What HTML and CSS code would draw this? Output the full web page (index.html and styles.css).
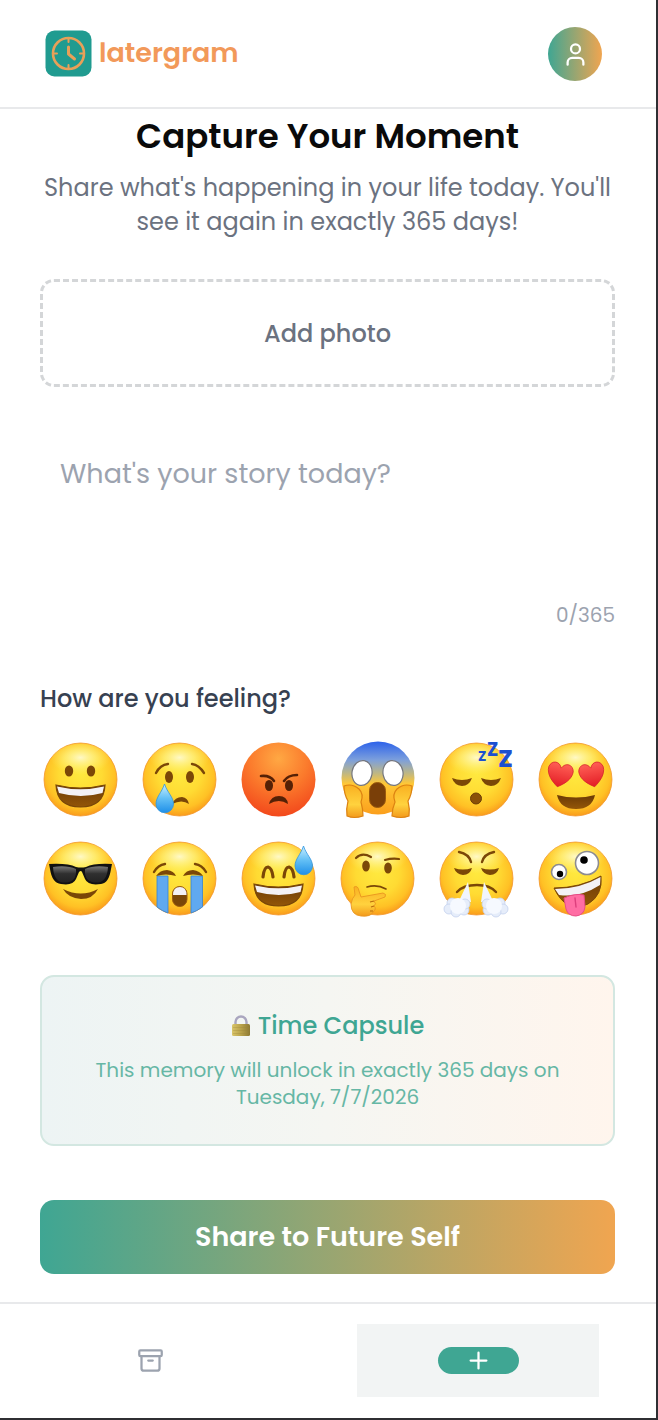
FILE: index.html
```html
<!DOCTYPE html>
<html lang="en">
<head>
    <meta charset="UTF-8">
    <meta name="viewport" content="width=device-width, initial-scale=1.0">
    <title>latergram</title>
    <link rel="stylesheet" href="styles.css">
</head>
<body>
    <!-- Shared emoji parts -->
    <svg class="sprite" width="0" height="0" aria-hidden="true">
        <defs>
            <radialGradient id="yellow" cx="50%" cy="42%" r="59%">
                <stop offset="0" stop-color="#ffe93f"/>
                <stop offset="0.5" stop-color="#ffdb33"/>
                <stop offset="0.8" stop-color="#ffc125"/>
                <stop offset="1" stop-color="#f9981b"/>
            </radialGradient>
            <radialGradient id="shine" cx="50%" cy="40%" r="50%">
                <stop offset="0" stop-color="#fffde0" stop-opacity="0.850"/>
                <stop offset="0.5" stop-color="#fff9a0" stop-opacity="0.500"/>
                <stop offset="1" stop-color="#fff27a" stop-opacity="0"/>
            </radialGradient>
            <radialGradient id="red" cx="50%" cy="22%" r="80%">
                <stop offset="0" stop-color="#ffa843"/>
                <stop offset="0.5" stop-color="#fb7a2c"/>
                <stop offset="1" stop-color="#f2461b"/>
            </radialGradient>
            <linearGradient id="fear" x1="0" y1="0" x2="0" y2="1">
                <stop offset="0" stop-color="#2c62ea"/>
                <stop offset="0.25" stop-color="#7c9fdc"/>
                <stop offset="0.42" stop-color="#b8b58c"/>
                <stop offset="0.58" stop-color="#ffc836"/>
                <stop offset="1" stop-color="#fb9f1c"/>
            </linearGradient>
            <linearGradient id="tear" x1="0" y1="0" x2="0" y2="1">
                <stop offset="0" stop-color="#c9efff"/>
                <stop offset="0.5" stop-color="#62bff5"/>
                <stop offset="1" stop-color="#1f8fe8"/>
            </linearGradient>
            <linearGradient id="lens" x1="0" y1="0" x2="0" y2="1">
                <stop offset="0" stop-color="#777"/>
                <stop offset="0.45" stop-color="#303030"/>
                <stop offset="1" stop-color="#222"/>
            </linearGradient>
            <linearGradient id="hand" x1="0" y1="0" x2="0" y2="1">
                <stop offset="0" stop-color="#f9b021"/>
                <stop offset="0.6" stop-color="#ffd23e"/>
                <stop offset="1" stop-color="#f39a1c"/>
            </linearGradient>
            <linearGradient id="heart" x1="0" y1="0" x2="0" y2="1">
                <stop offset="0" stop-color="#ff5f55"/>
                <stop offset="1" stop-color="#e31c25"/>
            </linearGradient>
            <linearGradient id="mouth" x1="0" y1="0" x2="0" y2="1">
                <stop offset="0" stop-color="#6b3a06"/>
                <stop offset="1" stop-color="#935608"/>
            </linearGradient>
            <linearGradient id="brass" x1="0" y1="0" x2="1" y2="0">
                <stop offset="0" stop-color="#d9c56a"/>
                <stop offset="0.5" stop-color="#b9a24b"/>
                <stop offset="1" stop-color="#8e7a34"/>
            </linearGradient>
            <g id="face">
                <circle cx="40.500" cy="40.500" r="36.500" fill="url(#yellow)" stroke="#f3952a" stroke-width="0.800"/>
                <ellipse cx="40.500" cy="22" rx="30" ry="17" fill="url(#shine)"/>
            </g>
            <g id="grin">
                <path d="M16 46Q40 52 65 46Q64 68 40.500 68Q17 68 16 46Z" fill="url(#mouth)"/>
                <path d="M17 47.500Q40 53 64 47.500L62.500 54Q41 60 19 54Z" fill="#f3f1f5"/>
                <path d="M16 46Q40 52 65 46Q64 68 40.500 68Q17 68 16 46Z" fill="none" stroke="#7a4708" stroke-width="1.200"/>
            </g>
            <path id="drop" d="M0 0C3 9 9 13 9 20A8.500 8.500 0 0 1 -8.500 20C-8.500 13 -3 9 0 0Z" fill="url(#tear)" stroke="#2f94df" stroke-width="0.800"/>
            <path id="love" d="M0 13C-6 9 -13 3 -12.500 -5C-11 -12 -3 -13 0 -6C3 -13 11 -12 12.500 -5C13 3 6 9 0 13Z" fill="url(#heart)" stroke="#d3202a" stroke-width="0.700"/>
            <g id="puff">
                <path d="M0 0L-9 19L3 20Z" fill="#f1f5fd"/>
                <g fill="#e6edfa" stroke="#c3d1ee" stroke-width="0.800">
                    <circle cx="-16" cy="21" r="5"/><circle cx="-19" cy="27" r="5"/><circle cx="-12" cy="30" r="5"/><circle cx="-4" cy="28" r="5"/><circle cx="-3" cy="22" r="5"/>
                </g>
                <circle cx="-10" cy="24" r="8" fill="#f6f9ff"/>
            </g>
        </defs>
    </svg>

    <div class="app">
        <header class="header">
            <a class="logo" href="#">
                <svg class="logo-icon" viewBox="0 0 47 47" aria-hidden="true">
                    <rect x="0.500" y="0.500" width="46" height="46" rx="9" fill="#209b90"/>
                    <g fill="none" stroke="#e9a058" stroke-linecap="round" stroke-linejoin="round">
                        <circle cx="23.500" cy="23.500" r="15.500" stroke-width="2.600"/>
                        <path d="M23.500 8v4M23.500 35v4M8 23.500h4M35 23.500h4" stroke-width="2"/>
                        <path d="M23.500 17v7l6 5" stroke-width="3"/>
                    </g>
                </svg>
                <span class="logo-text">latergram</span>
            </a>
            <button class="avatar" aria-label="Profile">
                <svg width="27" height="27" viewBox="0 0 24 24" fill="none" stroke="currentColor" stroke-width="2" stroke-linecap="round" stroke-linejoin="round">
                    <path d="M19 21v-2a4 4 0 0 0-4-4H9a4 4 0 0 0-4 4v2"/>
                    <circle cx="12" cy="7" r="4"/>
                </svg>
            </button>
        </header>

        <main class="content">
            <h1 class="title">Capture Your Moment</h1>
            <p class="subtitle">Share what's happening in your life today. You'll see it again in exactly 365 days!</p>

            <button class="add-photo">Add photo</button>

            <textarea class="story" aria-label="Your story" maxlength="365" placeholder="What's your story today?"></textarea>
            <div class="counter">0/365</div>

            <h2 class="question">How are you feeling?</h2>
            <div class="moods">
                <button class="mood" aria-label="Happy">
                    <svg viewBox="0 0 80 80">
                        <use href="#face"/>
                        <g fill="#7b4707"><ellipse cx="29" cy="32" rx="4.200" ry="5.500"/><ellipse cx="51" cy="32" rx="4.200" ry="5.500"/></g>
                        <use href="#grin"/>
                    </svg>
                </button>
                <button class="mood" aria-label="Sad">
                    <svg viewBox="0 0 80 80">
                        <use href="#face"/>
                        <g fill="#7b4707"><ellipse cx="30" cy="38" rx="4" ry="6"/><ellipse cx="51" cy="38" rx="4" ry="6"/></g>
                        <g fill="none" stroke="#7b4707" stroke-width="2.400" stroke-linecap="round"><path d="M17 34Q21 26 29 25"/><path d="M53 25Q60 26 65 34"/></g>
                        <path d="M33 65Q36 58 43 58Q49 59 50 65Q43 60 33 65Z" fill="#7b4707"/>
                        <use href="#drop" x="25.500" y="45"/>
                    </svg>
                </button>
                <button class="mood" aria-label="Angry">
                    <svg viewBox="0 0 80 80">
                        <circle cx="40.500" cy="40.500" r="37" fill="url(#red)"/>
                        <g fill="#552106"><ellipse cx="31" cy="46.500" rx="4" ry="5.500"/><ellipse cx="51" cy="46.500" rx="4" ry="5.500"/></g>
                        <g fill="none" stroke="#552106" stroke-width="2.600" stroke-linecap="round"><path d="M23 37Q32 36 36 42"/><path d="M46 42Q50 36 59 36"/></g>
                        <path d="M31 65Q33 57 41 57Q49 57 50 65Q41 59 31 65Z" fill="#552106"/>
                    </svg>
                </button>
                <button class="mood" aria-label="Shocked">
                    <svg viewBox="0 0 80 80">
                        <circle cx="41" cy="39" r="36.500" fill="url(#fear)"/>
                        <g fill="#fff" stroke="#74767e" stroke-width="1.200"><ellipse cx="25" cy="34" rx="10" ry="12.500" transform="rotate(10 25 34)"/><ellipse cx="56" cy="34" rx="10" ry="12.500" transform="rotate(-10 56 34)"/></g>
                        <rect x="32.500" y="43.500" width="16" height="25" rx="8" fill="#7a3f08" stroke="#9c5a0c"/>
                        <g fill="url(#hand)" stroke="#dc8212" stroke-width="1.200">
                            <path d="M7 47Q15 44 22 50Q27 55 24 63Q26 70 26 77Q17 80 10 77Q9 70 11 62Q7 55 7 47Z"/>
                            <path d="M75 47Q67 44 60 50Q55 55 58 63Q55 70 55 77Q64 80 72 77Q73 70 71 62Q75 55 75 47Z"/>
                        </g>
                    </svg>
                </button>
                <button class="mood" aria-label="Sleepy">
                    <svg viewBox="0 0 80 80">
                        <use href="#face"/>
                        <g fill="#7b4707"><path d="M16 39Q26 43 36 39Q33 47 26 47Q18 46 16 39Z"/><path d="M45 39Q55 43 65 39Q62 47 55 47Q47 46 45 39Z"/></g>
                        <circle cx="40" cy="59.500" r="5.500" fill="#8a5008" stroke="#6d3e06"/>
                        <g class="zzz"><text x="42" y="22" font-size="14">Z</text><text x="51" y="17" font-size="19">Z</text><text x="62" y="28" font-size="25">Z</text></g>
                    </svg>
                </button>
                <button class="mood" aria-label="In love">
                    <svg viewBox="0 0 80 80">
                        <use href="#face"/>
                        <use href="#love" transform="translate(25 35) rotate(12)"/>
                        <use href="#love" transform="translate(57 35) rotate(-12)"/>
                        <path d="M22 56Q41 61 60 56Q57 70 41 70Q25 70 22 56Z" fill="url(#mouth)"/>
                    </svg>
                </button>
                <button class="mood" aria-label="Cool">
                    <svg viewBox="0 0 80 80">
                        <use href="#face"/>
                        <path d="M9 26Q28 25 36 29Q41 30 46 29Q54 25 72 26L71 31Q69 45 61 46Q48 48 45 41L42 34Q41 32 39 34L36 41Q33 48 21 46Q12 45 10 31Z" fill="#111"/>
                        <path d="M13 29Q27 27 36 31Q37 43 27 44.500Q14 46 13 29Z" fill="url(#lens)"/>
                        <path d="M68 29Q54 27 45 31Q44 43 54 44.500Q67 46 68 29Z" fill="url(#lens)"/>
                        <path d="M23 51Q41 60 58 51Q53 61 41 61Q28 60 23 51Z" fill="#7b4707"/>
                    </svg>
                </button>
                <button class="mood" aria-label="Crying">
                    <svg viewBox="0 0 80 80">
                        <use href="#face"/>
                        <path d="M18 38H29V75Q23 73 18 69Z" fill="#60a9f0" stroke="#3484d6" stroke-width="0.800"/>
                        <path d="M52 38H63.500V69Q58 73 52 75Z" fill="#60a9f0" stroke="#3484d6" stroke-width="0.800"/>
                        <g fill="none" stroke="#7b4707" stroke-width="2.400" stroke-linecap="round"><path d="M15 34Q19 27 26 26"/><path d="M56 26Q63 27 67 34"/></g>
                        <g fill="#7b4707"><path d="M17 38Q21 32 28 32Q35 33 37 38Q27 35 17 38Z"/><path d="M44 38Q47 32 54 32Q61 33 64 38Q54 35 44 38Z"/></g>
                        <rect x="33.500" y="48.500" width="14.500" height="20" rx="7.250" fill="#7a4708" stroke="#9c5a0c"/>
                        <path d="M34 57Q34 49 41 49Q47.500 49 47.500 57Z" fill="#f3f1f5"/>
                    </svg>
                </button>
                <button class="mood" aria-label="Relieved">
                    <svg viewBox="0 0 80 80">
                        <use href="#face"/>
                        <g fill="none" stroke="#7b4707" stroke-width="3.200" stroke-linecap="round"><path d="M25 39Q26 29 30 29Q34 30 35 39"/><path d="M46 39Q47 29 51 29Q55 30 56 39"/></g>
                        <use href="#grin"/>
                        <use href="#drop" x="65.500" y="8"/>
                    </svg>
                </button>
                <button class="mood" aria-label="Thinking">
                    <svg viewBox="0 0 80 80">
                        <use href="#face"/>
                        <g fill="#7b4707"><ellipse cx="29" cy="28" rx="3.800" ry="5.500"/><ellipse cx="51" cy="30" rx="3.800" ry="5.500"/></g>
                        <g fill="none" stroke="#7b4707" stroke-width="2.200" stroke-linecap="round"><path d="M19 20Q25 14 34 19"/><path d="M48 22Q55 20 62 21"/><path d="M30 49Q40 46 49 51" stroke-width="1.600"/></g>
                        <path d="M17 49Q21 47 22 53L24 59L46 55Q50 56 48 59L37 63Q40 66 37 68Q40 71 36 74Q34 79 24 78Q14 77 14 66Q15 60 18 57Z" fill="url(#hand)" stroke="#e9951f" stroke-width="0.900" stroke-linejoin="round"/>
                        <path d="M37 63L33 64M37 68L34 69M36 73L33 73" stroke="#b96a0c" stroke-width="1.200"/>
                    </svg>
                </button>
                <button class="mood" aria-label="Frustrated">
                    <svg viewBox="0 0 80 80">
                        <use href="#face"/>
                        <g fill="none" stroke="#7b4707" stroke-width="2.400" stroke-linecap="round"><path d="M23 14Q33 16 35 24"/><path d="M58 14Q48 16 46 24"/><path d="M21 54Q27 47 41 47Q54 47 60 54"/></g>
                        <g fill="#7b4707"><path d="M18 30Q27 33 36 30Q34 37 27 37Q20 36 18 30Z"/><path d="M45 30Q54 33 63 30Q61 37 54 37Q47 36 45 30Z"/></g>
                        <use href="#puff" x="32" y="44"/>
                        <use href="#puff" transform="translate(48 44) scale(-1 1)"/>
                    </svg>
                </button>
                <button class="mood" aria-label="Silly">
                    <svg viewBox="0 0 80 80">
                        <use href="#face"/>
                        <g fill="#fff" stroke="#8c8b91" stroke-width="1.600"><circle cx="24" cy="34" r="7.500"/><circle cx="52" cy="25" r="11.500"/></g>
                        <circle cx="25" cy="36" r="3.200"/><circle cx="49" cy="22" r="3.800"/>
                        <path d="M19 50Q45 50 66 38Q68 57 53 66Q31 76 19 50Z" fill="url(#mouth)" stroke="#7b4707"/>
                        <path d="M20 51Q45 51 65.500 39L65 47Q45 60 24 57Z" fill="#f3f1f5"/>
                        <path d="M29 60Q39 55 49 57L50 69Q49 77 41 78Q33 78 31 71Z" fill="#ff6da4" stroke="#e84b87"/>
                        <path d="M40 60L41 69" stroke="#dd3f7d" stroke-width="1.400" stroke-linecap="round"/>
                    </svg>
                </button>
            </div>

            <section class="capsule">
                <h3 class="capsule-title">
                    <svg class="lock" width="20" height="24" viewBox="0 0 20 24" aria-hidden="true">
                        <path d="M4.500 12V8a5.500 5.500 0 0 1 11 0v4" fill="none" stroke="#aaa6bf" stroke-width="2.400"/>
                        <rect x="1" y="10" width="18" height="12" rx="1.500" fill="url(#brass)"/>
                        <path d="M2 13.500h16M2 16.500h16M2 19.500h16" stroke="#9c8638" stroke-opacity="0.300"/>
                    </svg>
                    Time Capsule
                </h3>
                <p class="capsule-text">This memory will unlock in exactly 365 days on Tuesday, 7/7/2026</p>
            </section>

            <button class="share">Share to Future Self</button>
        </main>

        <nav class="nav">
            <a class="nav-item" href="#" aria-label="Archive">
                <svg width="27" height="27" viewBox="0 0 24 24" fill="none" stroke="currentColor" stroke-width="2" stroke-linecap="round" stroke-linejoin="round">
                    <rect x="2" y="3" width="20" height="5" rx="1"/>
                    <path d="M4 8v11a2 2 0 0 0 2 2h12a2 2 0 0 0 2-2V8M10 12h4"/>
                </svg>
            </a>
            <a class="nav-item active" href="#" aria-label="New post">
                <span class="pill">
                    <svg width="27" height="27" viewBox="0 0 24 24" fill="none" stroke="currentColor" stroke-width="2" stroke-linecap="round"><path d="M5 12h14M12 5v14"/></svg>
                </span>
            </a>
        </nav>
    </div>
</body>
</html>
```
FILE: styles.css
```css
* {
    box-sizing: border-box;
}

body {
    margin: 0;
    background-color: #fff;
    font-family: Poppins, Inter, sans-serif;
}

button, textarea {
    font-family: inherit;
}

button {
    padding: 0;
    border: none;
    background: none;
    cursor: pointer;
}

.sprite {
    position: absolute;
}

.app {
    display: flex;
    flex-direction: column;
    min-height: 100vh;
    border-right: 2px solid #2f2f33;
    border-bottom: 2px solid #2f2f33;
}

.header {
    display: flex;
    justify-content: space-between;
    align-items: center;
    padding: 27px 54px 26px 45px;
    border-bottom: 2px solid #e8e9eb;
}

.logo {
    display: flex;
    align-items: center;
    gap: 7px;
    padding-bottom: 2px;
    text-decoration: none;
}

.logo-icon {
    width: 47px;
    height: 47px;
}

.logo-text {
    padding-bottom: 2px;
    color: #f2995a;
    font-size: 27px;
    font-weight: 600;
    line-height: 45px;
}

.avatar {
    display: flex;
    justify-content: center;
    align-items: center;
    width: 54px;
    height: 54px;
    border-radius: 50%;
    background: linear-gradient(90deg, #3fa693, #f0a550);
    color: #fff;
}

.content {
    display: flex;
    flex-direction: column;
    padding: 6px 41px 28px 40px;
}

.title {
    margin: 0 0 14px;
    color: #0a0a0a;
    font-size: 34px;
    font-weight: 600;
    line-height: 42px;
    text-align: center;
}

.subtitle {
    margin: 0 0 40px;
    color: #6b7280;
    font-size: 24px;
    line-height: 34px;
    text-align: center;
}

.add-photo {
    height: 108px;
    margin-bottom: 54px;
    border: 3px dashed #d4d6d8;
    border-radius: 14px;
    color: #6b7280;
    font-size: 24px;
    font-weight: 500;
}

.story {
    height: 156px;
    padding: 14px 20px;
    border: none;
    outline: none;
    resize: none;
    color: #374151;
    font-size: 27px;
    line-height: 38px;
}

.story::placeholder {
    color: #9ca3af;
    opacity: 1;
}

.counter {
    margin: 5px 0 53px;
    color: #9ca3af;
    font-size: 20px;
    line-height: 27px;
    text-align: right;
}

.question {
    margin: 0 0 23px;
    color: #374151;
    font-size: 24px;
    font-weight: 500;
    line-height: 34px;
}

.moods {
    display: grid;
    grid-template-columns: repeat(6, 1fr);
    gap: 19px;
    margin-bottom: 57px;
}

.mood svg {
    display: block;
    width: 100%;
    overflow: visible;
}

.zzz {
    fill: #1d50d0;
    font-weight: 700;
}

.capsule {
    margin-bottom: 54px;
    padding: 32px 40px 33px;
    border: 2px solid #d3e7e1;
    border-radius: 14px;
    background: linear-gradient(90deg, #edf4f4, #f5f6f2 50%, #fff5ed);
    text-align: center;
}

.capsule-title {
    display: flex;
    justify-content: center;
    align-items: center;
    gap: 7px;
    margin: 0 0 14px;
    color: #3fa693;
    font-size: 24px;
    font-weight: 500;
    line-height: 34px;
}

.capsule-text {
    margin: 0;
    color: #66b7a5;
    font-size: 20px;
    line-height: 27px;
}

.share {
    height: 74px;
    border-radius: 14px;
    background: linear-gradient(90deg, #3fa693, #f0a550);
    color: #fff;
    font-size: 27px;
    font-weight: 600;
}

.nav {
    display: grid;
    grid-template-columns: 1fr 1fr;
    gap: 86px;
    margin-top: auto;
    padding: 20px 57px 21px 29px;
    border-top: 2px solid #e8e9eb;
}

.nav-item {
    display: flex;
    justify-content: center;
    align-items: center;
    height: 73px;
    color: #9ca3af;
}

.nav-item.active {
    background-color: #f2f4f4;
}

.pill {
    display: flex;
    justify-content: center;
    width: 81px;
    border-radius: 14px;
    background-color: #3fa693;
    color: #fff;
}
```
